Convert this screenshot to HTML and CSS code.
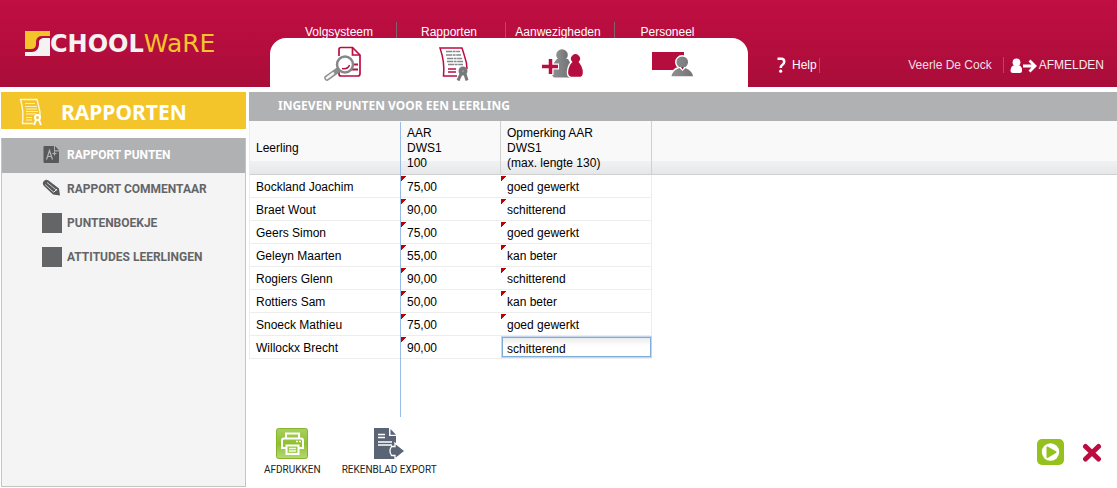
FILE: index.html
```
<!DOCTYPE html>
<html lang="nl">
<head>
<meta charset="utf-8">
<title>Schoolware - Rapporten</title>
<link rel="stylesheet" href="styles.css">
</head>
<body>
<svg width="0" height="0" class="defs" aria-hidden="true">
  <defs>
    <linearGradient id="grey" x1="0" x2="1"><stop offset="0" stop-color="#8f9193"/><stop offset="1" stop-color="#707274"/></linearGradient>
    <linearGradient id="green" x1="0" y1="0" x2="0" y2="1"><stop offset="0" stop-color="#a9cf62"/><stop offset=".5" stop-color="#8fc02f"/><stop offset="1" stop-color="#b4d874"/></linearGradient>
  </defs>
</svg>
<header class="top">
  <a class="logo" href="#">
    <svg width="25" height="25" viewBox="0 0 25 25" aria-hidden="true">
      <path fill="#f4c52b" d="M0 0h25v5H17Q12 5 11 10V13Q11 18 6 18H0z"/>
      <path fill="#f5f3f2" d="M25 7v18H0v-4H7Q13 21 14 14V11Q14 8 18 7z"/>
    </svg>
    <span class="logo-text"><span class="logo-school">CHOOL</span><span class="logo-ware">WaRE</span></span>
  </a>
  <nav class="tabs">
    <a class="tab" href="#">
      <span class="tab-label">Volgsysteem</span>
      <span class="tab-icon">
        <svg width="40" height="36" viewBox="0 0 40 36" fill="none">
          <path d="M16 10V3.500q0-2 2-2H29.500l7.500 7.500V27.500q0 2.500-2 2.500H18q-2 0-2-2V26" stroke="#bb0d40" stroke-width="1.700"/>
          <path d="M29.500 1.500V9H37" stroke="#bb0d40" stroke-width="1.700"/>
          <path d="M28 18.500h7M28 23.500h7" stroke="#bb0d40" stroke-width="2"/>
          <path d="M14.500 24.500 4 32" stroke="#8b8d8f" stroke-width="5.500" stroke-linecap="round"/>
          <path d="M10 27.500 4 32" stroke="#f5f5f5" stroke-width="2.800" stroke-linecap="round"/>
          <circle cx="22" cy="18.500" r="8" fill="#fff" stroke="#85878a" stroke-width="2.500"/>
          <path d="M19 22.500q6 1 7.500-3.500" stroke="#bb0d40" stroke-width="1.500"/>
        </svg>
      </span>
    </a>
    <a class="tab" href="#">
      <span class="tab-label">Rapporten</span>
      <span class="tab-icon">
        <svg width="32" height="36" viewBox="0 0 32 36" fill="none">
          <path d="M19 30H5.500Q7 16 2 2H24q1 3 2.500 8 2.500 7 2.500 13" stroke="#bb0d40" stroke-width="1.500"/>
          <path d="M8 5.500h14M8 9h15M9 12.500h15M9 15.500h16M10 18.500h15" stroke="#85878a" stroke-width="1.400" stroke-dasharray="6 .6 3 .6"/>
          <path d="M10 23h8M10 26h8" stroke="#bb0d40" stroke-width="1.500"/>
          <circle cx="25" cy="25" r="2.500" fill="#fff" stroke="#77797b" stroke-width="4"/>
          <path d="m23 28-3 6.500M27 28l2 6.500" stroke="#77797b" stroke-width="3"/>
        </svg>
      </span>
    </a>
    <a class="tab" href="#">
      <span class="tab-label">Aanwezigheden</span>
      <span class="tab-icon">
        <svg width="42" height="32" viewBox="0 0 42 32">
          <circle cx="20" cy="7" r="5.800" fill="url(#grey)"/>
          <path d="M15 11h11q2.500 3 3 8v10.500H12q-3-2-2-8 1-7 5-10.500z" fill="url(#grey)"/>
          <path d="M0 18.500h17M8.500 10v17" stroke="#fff" stroke-width="6"/>
          <path d="M0 18.500h16M8.500 11v15" stroke="#bb0d40" stroke-width="3.500"/>
          <path d="M29.500 14a5.200 5.200 0 1 1 8 0q4 5 4 10 0 5-3 5.500H29q-4-1-3.500-6 .5-6 4-9.500z" fill="#b50d3e" stroke="#fff" stroke-width="1.400"/>
        </svg>
      </span>
    </a>
    <a class="tab" href="#">
      <span class="tab-label">Personeel</span>
      <span class="tab-icon">
        <svg width="42" height="28" viewBox="0 0 42 28">
          <path fill="#b50d3e" d="M0 2h32v18H0z"/>
          <path d="M18.500 27q1-7 8-9.500a6.500 6.500 0 1 1 7.500 0q7 2.500 8 9.500z" fill="url(#grey)" stroke="#fff" stroke-width="1.400"/>
          <path d="m26.500 17 4 4 4-4" fill="#fff"/><path fill="#bb0d40" d="M29 17h3l-1.500 2.500z"/>
        </svg>
      </span>
    </a>
  </nav>
  <div class="session">
    <a class="help" href="#">
      <svg width="9" height="16" viewBox="0 0 9 16" fill="none"><path d="M.5 1.800H5q2.200.3 2.200 3 0 2-2 3.200Q3.700 9 3.700 11" stroke="#fff" stroke-width="2.600"/><circle cx="3.700" cy="14.200" r="1.600" fill="#fff"/></svg>
      <span class="help-label">Help</span>
    </a>
    <span class="user">Veerle De Cock</span>
    <a class="logout" href="#">
      <svg width="27" height="16" viewBox="0 0 27 16"><circle cx="6.500" cy="4.300" r="3.900" fill="#fff"/><path fill="#fff" d="M3 7.500h7q2.300 2 2 5.500 0 2-2 2H3q-2.500 0-2.500-2Q.5 9 3 7.500z"/><path d="M13 8h12M19.500 2.500 25 8l-5.500 5.500" fill="none" stroke="#fff" stroke-width="2.800"/></svg>
      <span>AFMELDEN</span>
    </a>
  </div>
</header>
<div class="layout">
  <aside class="side">
    <h1 class="side-title">
      <svg width="24" height="28" viewBox="0 0 24 28" fill="none">
        <path d="M14 25.500H3.500Q5 13 1.500 1.500H18q1 4 2 8 1.500 5 1 9" stroke="#fff6d8" stroke-width="1.400"/>
        <path d="M6 5.500h10M6 8.500h12M7 11h11M7 13.500h12M7 16h10M7 19.500h6M7 22h6" stroke="#fdf0c0" stroke-width="1"/>
        <circle cx="18.500" cy="19.500" r="2.500" stroke="#fff" stroke-width="2"/>
        <path d="m17 22-2 5M20 22l2 5" stroke="#fff" stroke-width="2"/>
      </svg>
      <span>RAPPORTEN</span>
    </h1>
    <nav class="menu">
      <a class="menu-item menu-item-active" href="#">
        <svg width="20" height="20" viewBox="0 0 20 20" fill="none"><path fill="#58595b" d="M2.500 1h9.500v5.500h5V17q0 1-1 1H2.500q-1 0-1-1V2q0-1 1-1z"/><path fill="#58595b" d="M13 1 17 5.200h-4z"/><path d="m4.500 14.500 3-9 3 9M5.500 11.500h4M10.500 8.500h4M12.500 6.500v4" stroke="#b3b4b6" stroke-width="1.200"/></svg>
        <span>RAPPORT PUNTEN</span>
      </a>
      <a class="menu-item" href="#">
        <svg width="20" height="20" viewBox="0 0 20 20" fill="none"><path fill="#58595b" d="M1.500 2.500q2-3 5-1L17 9.500l1 7-7-1L2 7q-2-2-.5-4.500z"/><path d="m3 5.500 9 8M5 3.500l10 8" stroke="#c9cacb" stroke-width="1"/><path d="m12 13 3-3" stroke="#f4f4f4" stroke-width="1"/></svg>
        <span>RAPPORT COMMENTAAR</span>
      </a>
      <a class="menu-item" href="#"><span class="block"></span><span>PUNTENBOEKJE</span></a>
      <a class="menu-item" href="#"><span class="block"></span><span>ATTITUDES LEERLINGEN</span></a>
    </nav>
  </aside>
  <main class="content">
    <h2 class="content-title">INGEVEN PUNTEN VOOR EEN LEERLING</h2>
    <div class="grid">
      <table class="scores">
        <colgroup><col class="col-name"><col class="col-score"><col class="col-note"><col></colgroup>
        <thead>
          <tr><th scope="col">Leerling</th><th scope="col">AAR<br>DWS1<br>100</th><th scope="col"><label for="note">Opmerking AAR<br>DWS1<br>(max. lengte 130)</label></th><td></td></tr>
        </thead>
        <tbody>
          <tr><td>Bockland Joachim</td><td class="edited">75,00</td><td class="edited">goed gewerkt</td><td></td></tr>
          <tr><td>Braet Wout</td><td class="edited">90,00</td><td class="edited">schitterend</td><td></td></tr>
          <tr><td>Geers Simon</td><td class="edited">75,00</td><td class="edited">goed gewerkt</td><td></td></tr>
          <tr><td>Geleyn Maarten</td><td class="edited">55,00</td><td class="edited">kan beter</td><td></td></tr>
          <tr><td>Rogiers Glenn</td><td class="edited">90,00</td><td class="edited">schitterend</td><td></td></tr>
          <tr><td>Rottiers Sam</td><td class="edited">50,00</td><td class="edited">kan beter</td><td></td></tr>
          <tr><td>Snoeck Mathieu</td><td class="edited">75,00</td><td class="edited">goed gewerkt</td><td></td></tr>
          <tr><td>Willockx Brecht</td><td class="edited">90,00</td><td class="editing"><input class="note" id="note" type="text" maxlength="130" value="schitterend"></td><td></td></tr>
        </tbody>
      </table>
    </div>
    <div class="actions">
      <button class="action" type="button">
        <svg width="32" height="32" viewBox="0 0 32 32" fill="none">
          <rect x=".5" y=".5" width="31" height="30" rx="2" fill="url(#green)" stroke="#86b52c"/>
          <path d="M10 10V5.500h13V10M10.500 20H6v-7.500q0-2 2-2h17q2 0 2 2V20h-4" stroke="#fff" stroke-width="2"/>
          <path d="M10.500 17.500h12V26h-12z" stroke="#fff" stroke-width="2"/>
          <path d="M13 20.500h7M13 23h7" stroke="#f4fbe2" stroke-width="1.300"/><path d="M20 13.500h2M23 13.500h2" stroke="#fff" stroke-width="1.500"/>
        </svg>
        <span>AFDRUKKEN</span>
      </button>
      <button class="action" type="button">
        <svg width="32" height="32" viewBox="0 0 32 32" fill="none">
          <path fill="#5b6474" d="M1 0h15v8h7v23H1z"/><path fill="#5b6474" d="M17.500 1 23 6.800h-5.500z"/>
          <path d="M5 6.500h7M5 9.500h7M5 14h14M5 17h14" stroke="#fff" stroke-width="1.300"/>
          <path fill="#5b6474" stroke="#fff" stroke-width="1.300" d="M18.500 18.500h3.500V15l10 8-10 8v-3.500h-3.500q-3-4.500 0-9z"/>
        </svg>
        <span>REKENBLAD EXPORT</span>
      </button>
      <div class="confirm">
        <button class="icon-button" type="button" aria-label="Volgende">
          <svg width="27" height="27" viewBox="0 0 27 27"><rect width="27" height="26" rx="5" fill="#95c11f"/><circle cx="13.500" cy="13" r="8.700" fill="#fff"/><path fill="#95c11f" stroke="#95c11f" stroke-width="2" stroke-linejoin="round" d="M10.500 8.500v9.500l8-4.800z"/></svg>
        </button>
        <button class="icon-button" type="button" aria-label="Sluiten">
          <svg width="20" height="20" viewBox="0 0 20 20"><path d="m3.500 3.500 13 12.500M16.500 3.500 3.500 16" stroke="#bb0d40" stroke-width="5" stroke-linecap="round"/></svg>
        </button>
      </div>
    </div>
  </main>
</div>
</body>
</html>
```
FILE: styles.css
```
* { box-sizing: border-box; }
body {
  margin: 0;
  min-height: 100vh;
  display: flex;
  flex-direction: column;
  background: #fff;
  color: #000;
  font: 12px/15px "Liberation Sans", Arial, sans-serif;
}
a { color: inherit; text-decoration: none; }
svg { display: block; flex: none; }
button { border: 0; padding: 0; background: none; color: inherit; cursor: pointer; }
.defs { position: absolute; }

.top {
  display: flex;
  height: 87px;
  background: linear-gradient(#c00e42, #aa0d39);
  color: #fff;
}
.logo {
  display: flex;
  align-items: center;
  width: 270px;
  padding-left: 25px;
  font: 24px/24px "DejaVu Sans", sans-serif;
}
.logo-text { white-space: nowrap; }
.logo-school { color: #f5f3f2; font-weight: bold; }
.logo-ware { color: #f4c52b; font-size: 25px; }

.tabs { display: flex; }
.tab { display: flex; flex-direction: column; width: 109px; }
.tab-label {
  height: 16px;
  margin-top: 22px;
  padding: 3px 4px 0 0;
  border-right: 1px solid #83606c;
  text-align: center;
}
.tab-icon {
  flex: 1;
  display: flex;
  align-items: center;
  justify-content: center;
  padding: 2px 0 0 4px;
  background: #fff;
}
.tab:first-child { width: 127px; }
.tab:first-child .tab-label { padding-left: 16px; }
.tab:first-child .tab-icon { padding-left: 18px; border-top-left-radius: 16px; }
.tab:last-child { width: 133px; }
.tab:last-child .tab-label { padding-right: 28px; border-right: 0; }
.tab:last-child .tab-icon { padding-right: 22px; border-top-right-radius: 16px; }

.session {
  flex: 1;
  display: flex;
  align-items: center;
  height: 44px;
  margin-top: 43px;
  padding: 0 13px 0 29px;
}
.help { display: flex; align-items: center; gap: 6px; margin-right: auto; }
.help-label { padding-right: 2px; border-right: 1px solid #83606c; }
.user { padding: 1px 11px 0 0; border-right: 1px solid #83606c; color: #f3dfe5; }
.logout { display: flex; align-items: center; gap: 2px; padding: 1px 0 0 6px; color: #f8eaee; }

.layout { flex: 1; display: flex; gap: 3px; padding: 5px 0 1px 1px; }
.side { width: 245px; display: flex; flex-direction: column; gap: 9px; }
.side-title {
  display: flex;
  align-items: center;
  gap: 18px;
  height: 37px;
  margin: 0;
  padding: 2px 0 0 18px;
  background: #f4c52b;
  color: #fff;
  font: bold 21px/24px "Noto Sans", sans-serif;
}
.menu { flex: 1; border: 1px solid #c3c4c6; border-top-color: #b0b1b3; background: #f4f4f4; }
.menu-item {
  display: flex;
  align-items: center;
  gap: 5px;
  height: 34px;
  padding: 0 0 2px 40px;
  color: #646567;
  font: bold 12px/16px Roboto, "Liberation Sans", sans-serif;
}
.menu-item-active { background: #b0b1b3; color: #fff; }
.block { width: 20px; height: 20px; background: #646567; }

.content { flex: 1; display: flex; flex-direction: column; }
.content-title {
  height: 29px;
  margin: 0;
  padding: 6px 29px;
  background: #b0b1b3;
  color: #fff;
  font: bold 12px/16px "Noto Sans", sans-serif;
}
.grid { position: relative; flex: 1; }
.grid::after {
  content: "";
  position: absolute;
  left: 151px;
  top: 1px;
  bottom: 0;
  width: 1px;
  background: #99bbe8;
}
.scores { width: 100%; table-layout: fixed; border-collapse: separate; border-spacing: 0; }
.col-name { width: 152px; }
.col-score { width: 100px; }
.col-note { width: 151px; }
.scores th, .scores td { padding: 2px 6px 0; border: 0 solid #ededed; text-align: left; font-weight: normal; }
.scores thead tr { height: 54px; background: linear-gradient(#f9f9f9 75%, #f0f1f2 75%, #e5e6e8); }
.scores thead th, .scores thead td { border-bottom: 1px solid #d0d0d0; }
.scores thead th:nth-child(n+2) { border-right: 1px solid #d0d0d0; }
.scores tbody tr { height: 23px; }
.scores tbody td:nth-child(-n+3) { border-bottom-width: 1px; }
.scores tbody td:nth-child(3) { border-right-width: 1px; }
.scores th:first-child, .scores tbody td:first-child { border-left: 1px solid #ededed; }
.edited { background: linear-gradient(135deg, #c00000 4px, transparent 4px) 0 1px no-repeat; }
.scores .editing { padding: 0 0 0 1px; }
.note {
  display: block;
  width: 100%;
  height: 20px;
  padding: 4px 4px 0;
  border: 1px solid #7eadd9;
  outline: 1px solid #c3d8ee;
  background: linear-gradient(#ececec, #fff 8px);
  color: #000;
  font: inherit;
}

.actions { display: flex; align-items: flex-start; gap: 21px; padding: 11px 15px; }
.action {
  display: flex;
  flex-direction: column;
  align-items: center;
  gap: 4px;
  color: #222;
  font: 10px/12px Roboto, "Liberation Sans", sans-serif;
}
.confirm { display: flex; align-items: center; gap: 18px; margin-left: auto; padding-top: 11px; }
```
